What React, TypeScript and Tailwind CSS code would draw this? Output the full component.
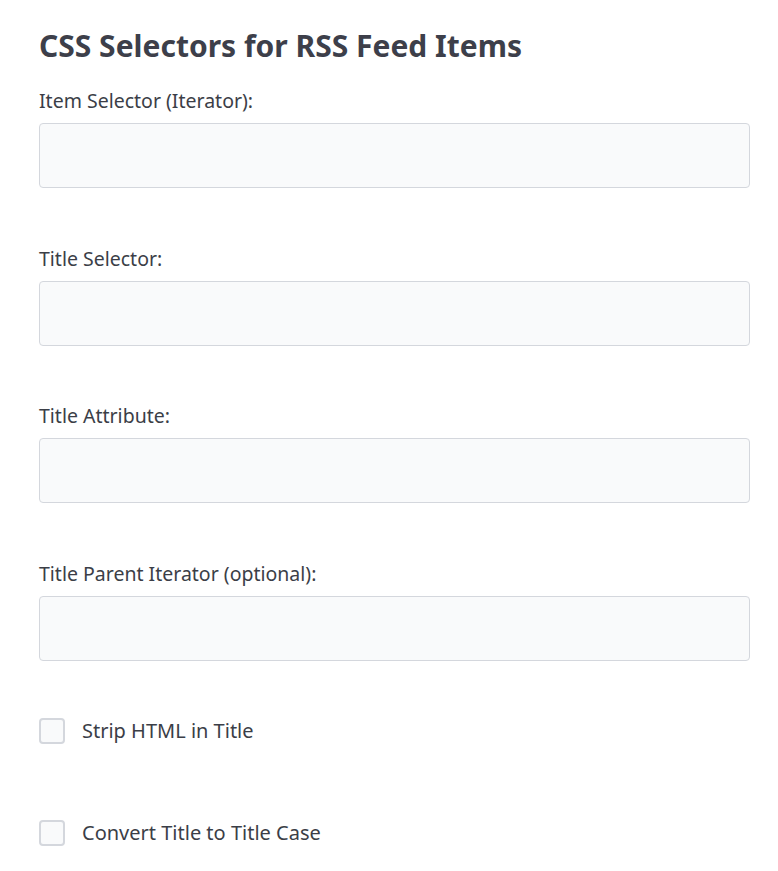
export default function App() {
  const fields = [
    'Item Selector (Iterator):',
    'Title Selector:',
    'Title Attribute:',
    'Title Parent Iterator (optional):',
  ];
  const checks = ['Strip HTML in Title', 'Convert Title to Title Case'];

  return (
    <div className="min-h-screen bg-white text-[#3b3e47] px-[39px] pt-[26px]" style={{ fontFamily: '"Noto Sans", "Open Sans", sans-serif' }}>
      <h2 className="text-[30px] font-bold leading-[40px] text-[#3d3f4a] mb-[21px]">CSS Selectors for RSS Feed Items</h2>
      <div className="w-[711px]">
        {fields.map((f) => (
          <div key={f} className="mb-[56.5px]">
            <label className="block text-[19.5px] leading-[27px] mb-[9px]">{f}</label>
            <input
              type="text"
              className="block w-full h-[65px] rounded-[4px] border border-[#d4d7dd] bg-[#f9fafb] px-3 outline-none"
            />
          </div>
        ))}
        {checks.map((c) => (
          <label key={c} className="flex items-center gap-[17px] h-[27px] mb-[75px] text-[20px]">
            <span className="w-[26px] h-[26px] rounded-[4px] border-2 border-[#d4d7dd] bg-[#f9fafb] shrink-0" />
            {c}
          </label>
        ))}
      </div>
    </div>
  );
}
